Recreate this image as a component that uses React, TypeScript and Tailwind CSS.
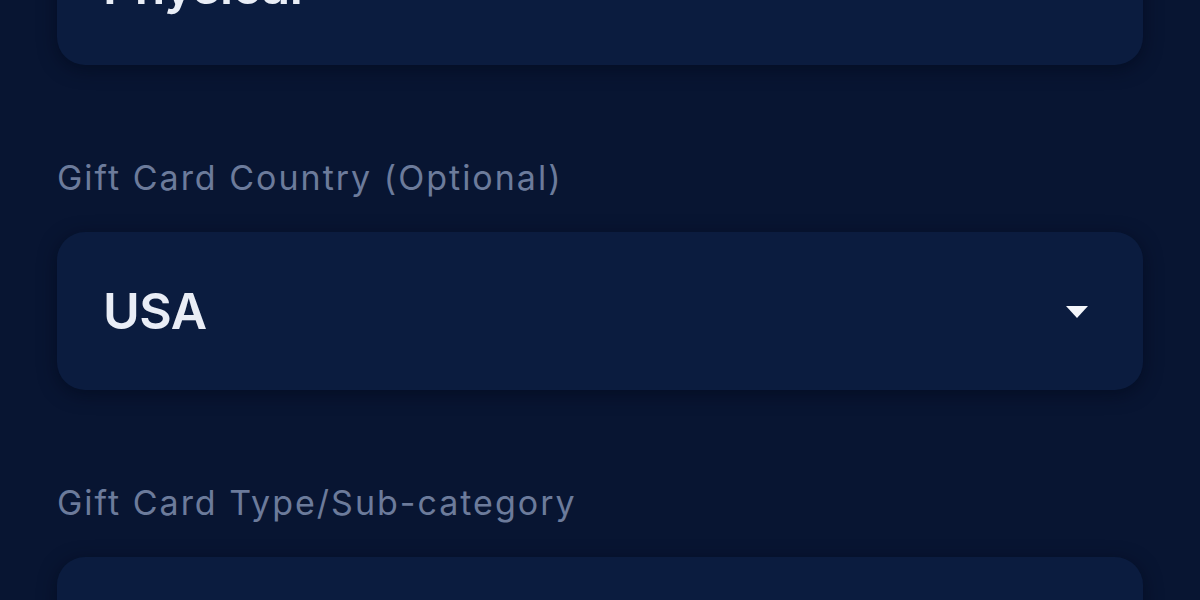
import React from 'react';

interface SelectFieldProps {
  value: string;
  chevron?: boolean;
  className?: string;
}

function SelectField({ value, chevron = true, className = '' }: SelectFieldProps) {
  return (
    <div
      className={`h-[158px] rounded-[28px] bg-[#0b1c3f] shadow-[0_4px_18px_rgba(2,8,24,0.55)] flex items-center justify-between pl-[46px] pr-[54px] ${className}`}
    >
      <span className="text-[50px] font-semibold text-[#e9edf6] tracking-[-0.5px]">{value}</span>
      {chevron && (
        <svg width="24" height="16" viewBox="0 0 24 16" className="mt-[2px]">
          <path d="M1 2 L23 2 L12 14 Z" fill="#f4f6fb" strokeLinejoin="round" />
        </svg>
      )}
    </div>
  );
}

function FieldLabel({ children }: { children: React.ReactNode }) {
  return <div className="text-[34px] leading-[40px] text-[#6c7b9b] tracking-[2px]">{children}</div>;
}

export default function App() {
  return (
    <div
      className="w-[1200px] h-[600px] overflow-hidden bg-[#081532] px-[57px]"
      style={{ fontFamily: 'Inter, "Noto Sans", sans-serif' }}
    >
      <SelectField value="Physical" chevron={false} className="mt-[-93px]" />
      <div className="mt-[93px]">
        <FieldLabel>Gift Card Country (Optional)</FieldLabel>
      </div>
      <SelectField value="USA" className="mt-[34px]" />
      <div className="mt-[93px]">
        <FieldLabel>Gift Card Type/Sub-category</FieldLabel>
      </div>
      <SelectField value="" chevron={false} className="mt-[34px]" />
    </div>
  );
}
